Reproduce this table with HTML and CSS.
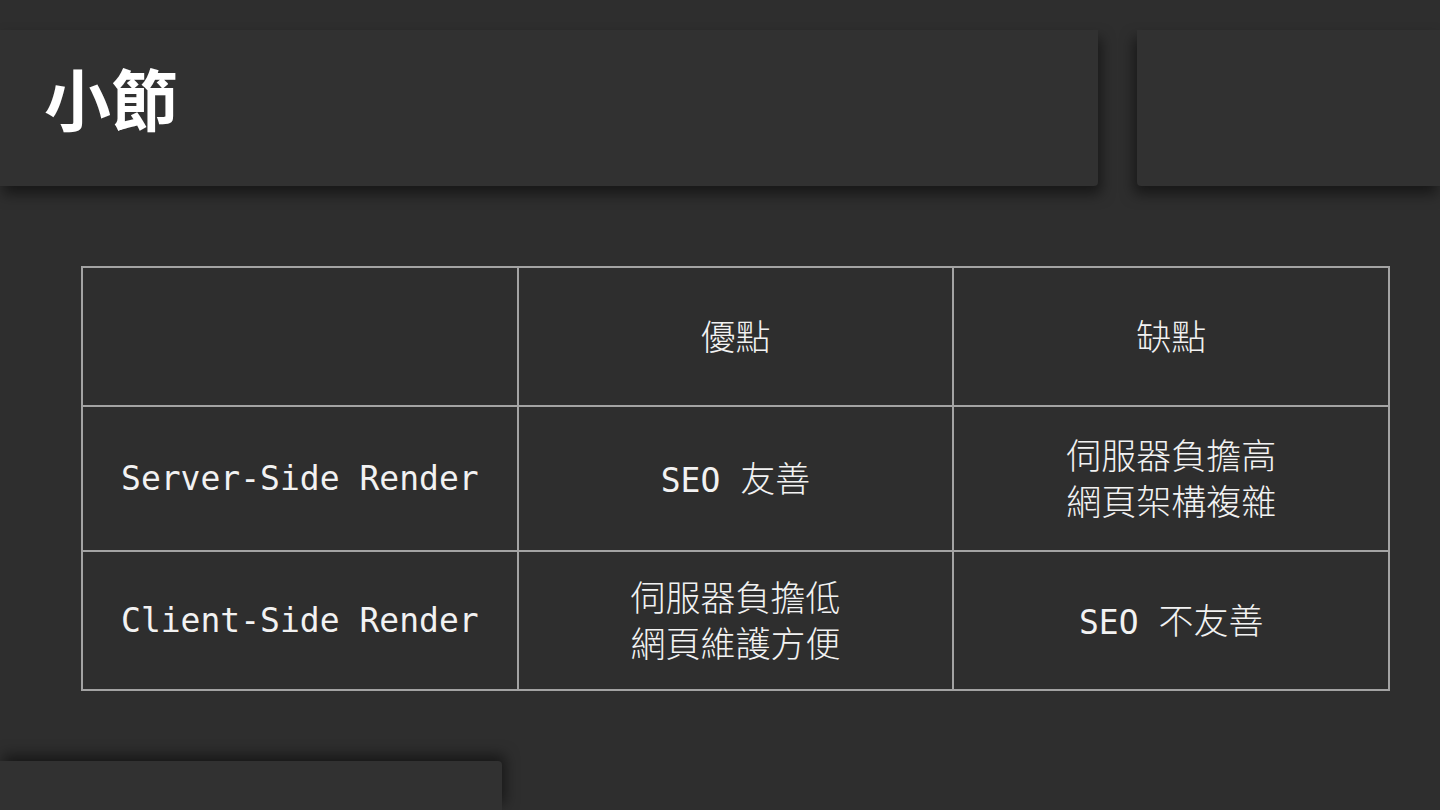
FILE: index.html
```html
<!DOCTYPE html>
<html lang="zh-Hant">
<head>
<meta charset="utf-8">
<title>小節</title>
<link rel="stylesheet" href="styles.css">
</head>
<body>
<div class="slide">
  <header class="top">
    <div class="title-panel"><h1 class="title">小節</h1></div>
    <div class="side-panel"></div>
  </header>
  <main class="content">
    <table class="summary">
      <tr class="row-head">
        <td></td>
        <td><span class="cjk">優點</span></td>
        <td><span class="cjk">缺點</span></td>
      </tr>
      <tr class="row-a">
        <td>Server-Side Render</td>
        <td>SEO <span class="cjk">友善</span></td>
        <td><span class="cjk">伺服器負擔高<br>網頁架構複雜</span></td>
      </tr>
      <tr class="row-b">
        <td>Client-Side Render</td>
        <td><span class="cjk">伺服器負擔低<br>網頁維護方便</span></td>
        <td>SEO <span class="cjk">不友善</span></td>
      </tr>
    </table>
  </main>
  <div class="bottom-panel"></div>
</div>
</body>
</html>
```
FILE: styles.css
```css
* { box-sizing: border-box; }
html, body {
  margin: 0;
  padding: 0;
  background: #2e2e2e;
}
.slide {
  width: 1440px;
  height: 810px;
  overflow: hidden;
  display: flex;
  flex-direction: column;
  background: #2e2e2e;
}
.top {
  margin-top: 30px;
  height: 156px;
  display: flex;
  gap: 39px;
}
.title-panel {
  width: 1098px;
  background: #313131;
  border-bottom-right-radius: 4px;
  box-shadow: 3px 8px 14px rgba(0, 0, 0, 0.5);
  display: flex;
  align-items: center;
  padding: 0 0 24px 44px;
}
.side-panel {
  flex: 1;
  background: #313131;
  border-bottom-left-radius: 4px;
  box-shadow: -3px 8px 14px rgba(0, 0, 0, 0.5);
}
.title {
  margin: 0;
  font-family: "Noto Sans CJK TC", sans-serif;
  font-weight: 700;
  font-size: 67px;
  line-height: 1;
  color: #ffffff;
}
.content {
  padding: 80px 0 0 81px;
}
.summary {
  border-collapse: collapse;
  width: 1309px;
  table-layout: fixed;
  color: #f2f2f2;
  font-family: "DejaVu Sans Mono", "Noto Sans CJK TC", monospace;
  font-size: 33px;
}
.summary td {
  border: 2px solid #a3a3a3;
  text-align: center;
  vertical-align: middle;
  padding: 0;
  line-height: 42px;
}
.row-head { height: 139px; }
.row-a { height: 145px; }
.row-b { height: 139px; }
.cjk {
  font-family: "Noto Sans CJK TC", sans-serif;
  font-weight: 300;
  font-size: 35px;
  line-height: 42px;
}
.bottom-panel {
  margin-top: auto;
  width: 502px;
  height: 49px;
  background: #313131;
  border-top-right-radius: 4px;
  box-shadow: 3px -6px 14px rgba(0, 0, 0, 0.5);
}
```
